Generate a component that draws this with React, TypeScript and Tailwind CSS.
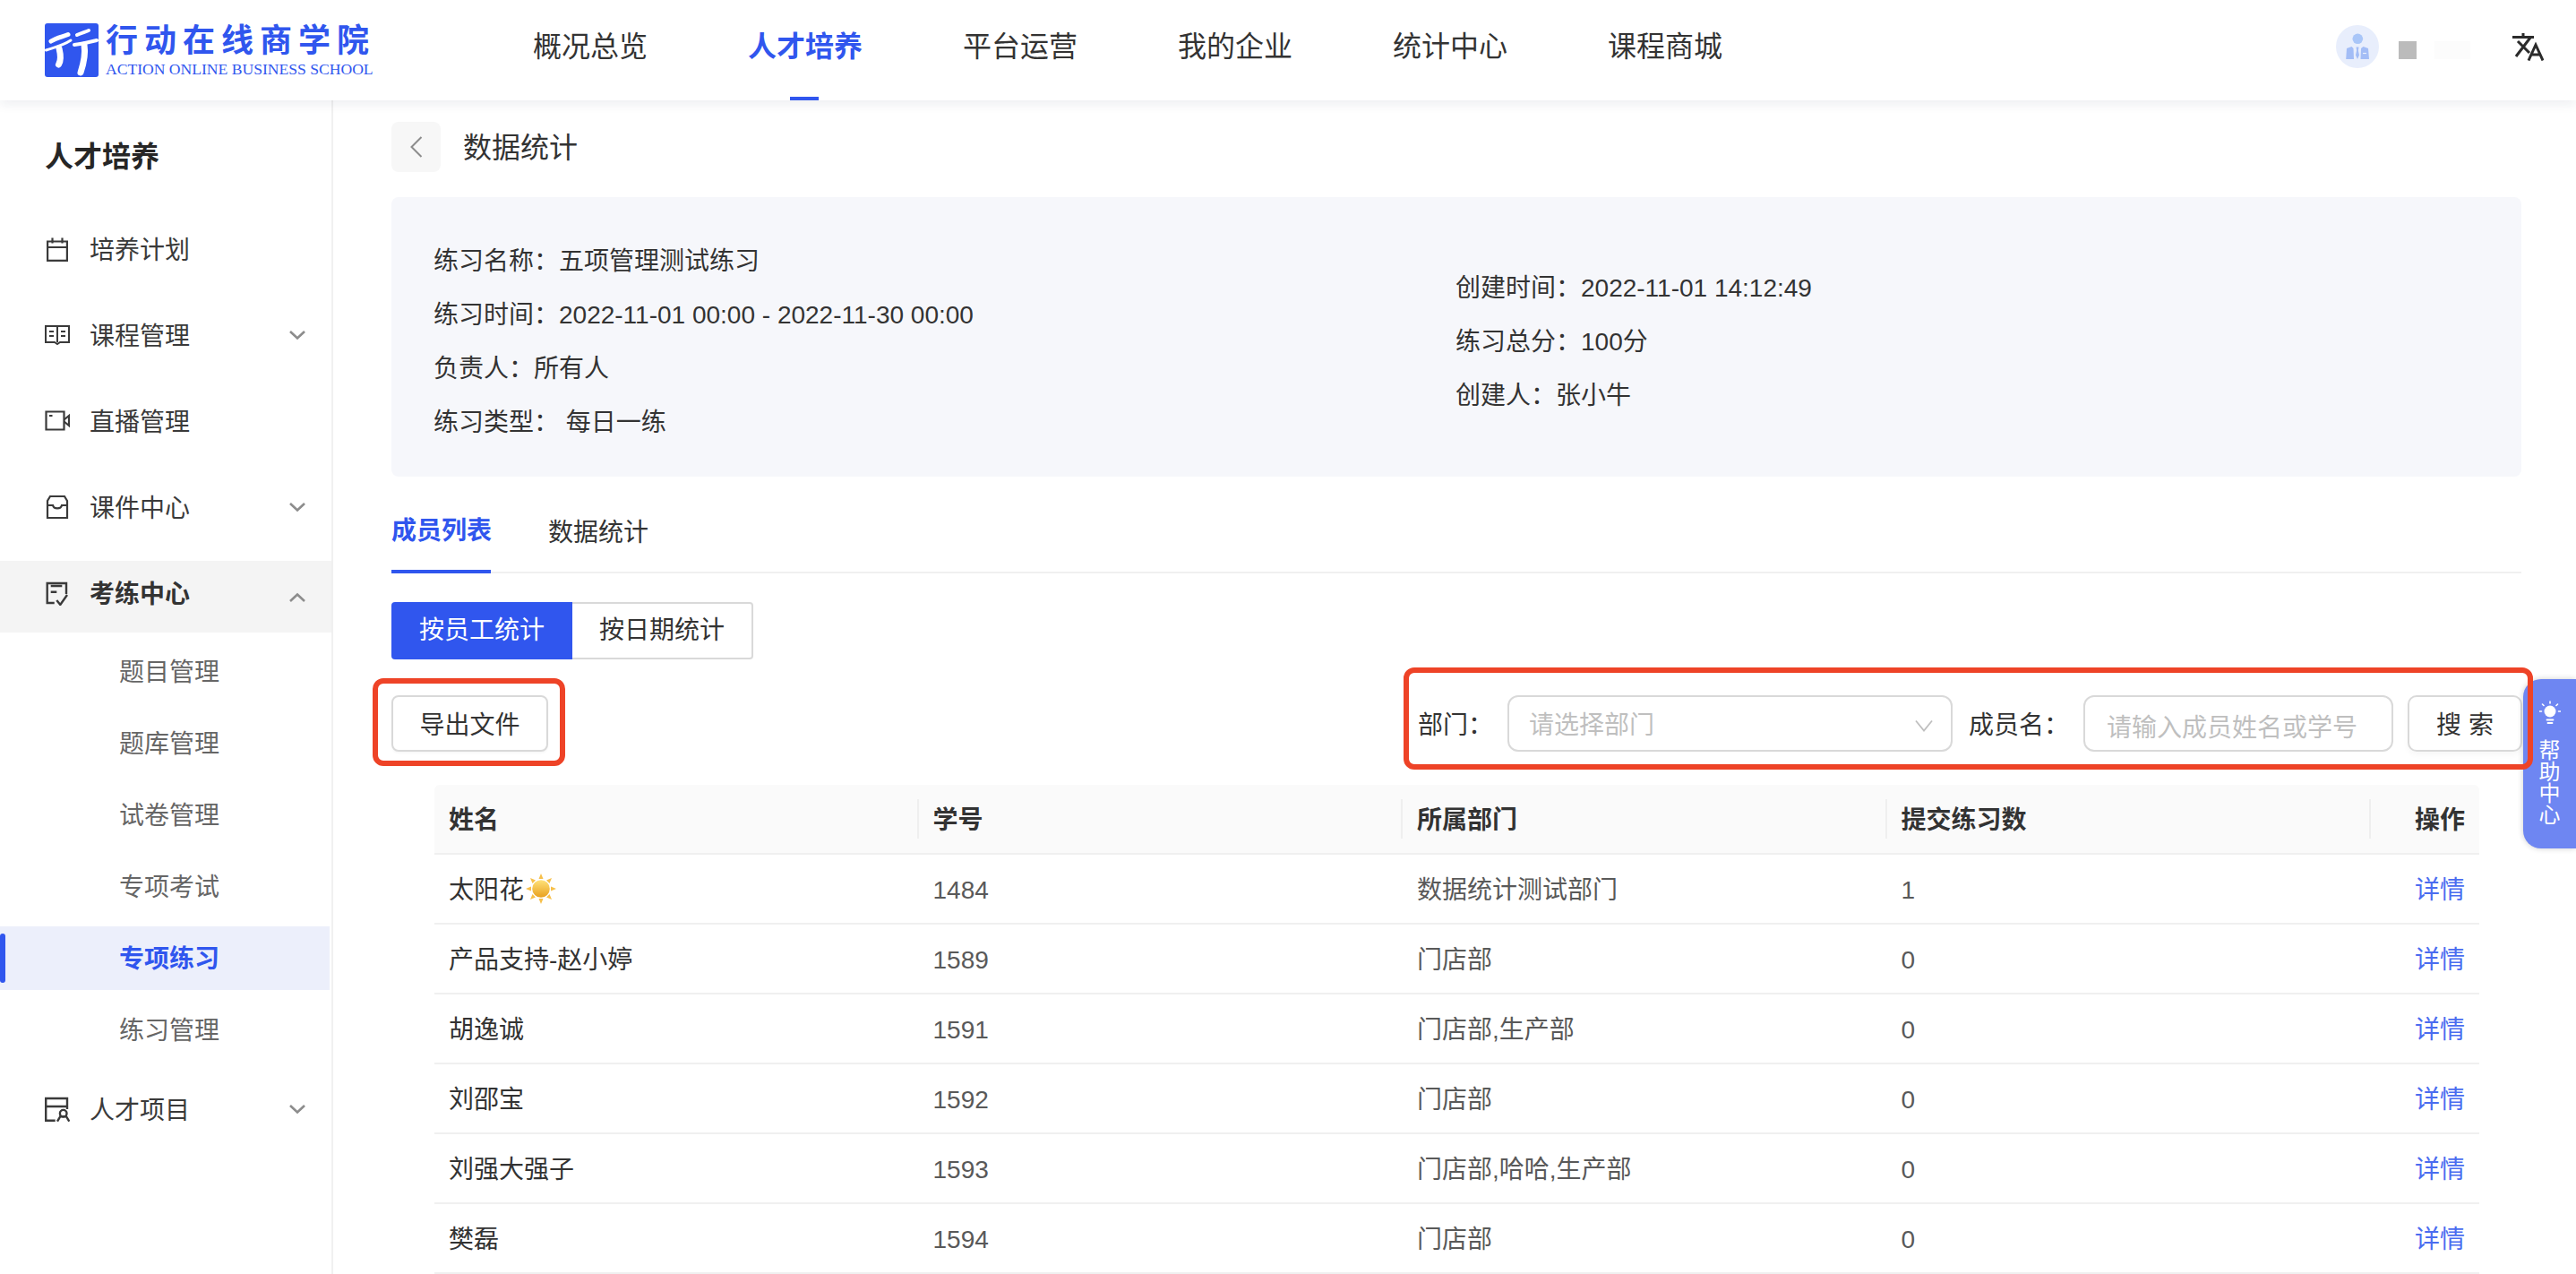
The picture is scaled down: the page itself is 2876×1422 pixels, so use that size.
import React from "react";

const COLON = "\uFF1A";

const Chevron = ({ up = false }: { up?: boolean }) => (
  <svg width="20" height="12" viewBox="0 0 20 12" fill="none" className="shrink-0">
    <path d={up ? "M2 10 10 2.5 18 10" : "M2 2 10 9.5 18 2"} stroke="#8c8c8c" strokeWidth="2.6" />
  </svg>
);

const iconProps = { fill: "none", stroke: "#3a3a3a", strokeWidth: 2.2 } as const;

const CalendarIcon = () => (
  <svg width="28" height="28" viewBox="0 0 28 28" {...iconProps}>
    <path d="M3.1 5.5h21.8v21.4H3.1z" />
    <path d="M3 12h22M8.5 1.5v6M19.5 1.5v6" />
  </svg>
);
const BookIcon = () => (
  <svg width="28" height="28" viewBox="0 0 28 28" {...iconProps} strokeWidth={2}>
    <path d="M1 4h26v18H17l-3 2-3-2H1z" />
    <path d="M14 4v18M5 10h5M5 15h5M18 10h5M18 15h5" />
  </svg>
);
const VideoIcon = () => (
  <svg width="28" height="28" viewBox="0 0 28 28" {...iconProps}>
    <path d="M1.5 3.5h20v20h-20z" />
    <path d="M21.5 12.5 27 8v11l-5.5-4.5M5 8h3.5" />
  </svg>
);
const InboxIcon = () => (
  <svg width="28" height="28" viewBox="0 0 28 28" {...iconProps}>
    <path d="M6 2h16l3 5v19H3V7z" />
    <path d="M3 12h6c1 4.5 9 4.5 10 0h6" />
  </svg>
);
const ExamIcon = () => (
  <svg width="28" height="28" viewBox="0 0 28 28" {...iconProps} strokeWidth={2.4}>
    <path d="M10.7 25H2.700V3H24v12" />
    <path d="M6.700 6h12.600M6.700 12.700h6.600M13.300 22l4 5 7.700-11" />
  </svg>
);
const ProjectIcon = () => (
  <svg width="28" height="28" viewBox="0 0 28 28" {...iconProps} strokeWidth={2.4}>
    <path d="M11.700 26.700H1.200V2H25v12M1.200 11H25" />
    <circle cx="20.700" cy="18.700" r="3.800" />
    <path d="M14 27.700l3.300-5.500h6.700l3.300 5.500" />
  </svg>
);

const Logo = () => (
  <svg width="60" height="60" viewBox="0 0 60 60" className="shrink-0">
    <rect width="60" height="60" rx="3" fill="#3056ee" />
    <g fill="none" stroke="#fff" strokeLinecap="round">
      <path d="M7 20C13 16 20 15 26 12.500" strokeWidth="5" />
      <path d="M1.500 30C10 27 20 25 29 19" strokeWidth="3" />
      <path d="M16 28C18 36 18 42 15.500 46" strokeWidth="7" />
      <path d="M36 13C40 11 44 10 49 8" strokeWidth="4" />
      <path d="M33 24C42 23 50 21 58 19" strokeWidth="4" />
      <path d="M44 24C46 36 43 46 40 55" strokeWidth="7" />
    </g>
  </svg>
);

const SunIcon = () => (
  <svg width="34" height="34" viewBox="0 0 34 34" className="shrink-0">
    <defs>
      <linearGradient id="sunFill" x1="0" y1="0" x2="0" y2="1">
        <stop offset="0" stopColor="#ffe27a" />
        <stop offset="1" stopColor="#e8a01e" />
      </linearGradient>
    </defs>
    <g fill="#f7c04a">
      <path d="M17 0l2.500 6h-5zM17 34l-2.500-6h5zM0 17l6-2.500v5zM34 17l-6 2.500v-5z" />
      <path d="M5 5l6 2.500-3.500 3.500zM29 5l-2.500 6-3.500-3.500zM5 29l2.500-6 3.500 3.500zM29 29l-6-2.500 3.500-3.500z" />
    </g>
    <circle cx="17" cy="17" r="9.800" fill="url(#sunFill)" />
  </svg>
);

const TopAvatar = () => (
  <svg width="48" height="48" viewBox="0 0 48 48" className="shrink-0">
    <circle cx="24" cy="24" r="24" fill="#e8eefc" />
    <circle cx="24.300" cy="15.300" r="5.800" fill="#a9c6f8" />
    <path d="M17.500 24 12 26l-.8 12H20l-.5-12zM30.500 24l5.500 2 1 12h-9.500l.5-12z" fill="#a3bdf6" />
    <path d="M22.500 24.500h3l-.6 4 1.100 5-2 4.500-2-4.500 1.100-5z" fill="#a3bdf6" />
    <path d="M30 31.500h4" stroke="#e8eefc" strokeWidth="1.200" />
  </svg>
);

const TranslateIcon = () => (
  <svg width="36" height="32" viewBox="0 0 36 32" fill="none" stroke="#2b2b2b" strokeWidth="3">
    <path d="M1 5.500h24M13 1v4.500M21 6 5 27M7 10l13 13" />
    <path d="M19 31.500 27 14l8 17.500M22 25h10" />
  </svg>
);

const BulbIcon = () => (
  <svg width="24" height="28" viewBox="0 0 24 28" fill="none" stroke="#fff" strokeLinecap="round">
    <circle cx="12" cy="12" r="6.500" fill="#fff" stroke="none" />
    <path d="M12 1v2M3.500 4l1.500 1.500M20.500 4 19 5.500M0.500 12h2M21.500 12h2" strokeWidth="1.600" />
    <path d="M8.500 21.500h7M9.500 25h5" strokeWidth="1.800" />
  </svg>
);

const menu = [
  { label: "培养计划", icon: <CalendarIcon /> },
  { label: "课程管理", icon: <BookIcon />, chevron: true },
  { label: "直播管理", icon: <VideoIcon /> },
  { label: "课件中心", icon: <InboxIcon />, chevron: true },
];

const subMenu = ["题目管理", "题库管理", "试卷管理", "专项考试", "专项练习", "练习管理"];
const nav = ["概况总览", "人才培养", "平台运营", "我的企业", "统计中心", "课程商城"];

const rows: [string, string, string, string][] = [
  ["太阳花", "1484", "数据统计测试部门", "1"],
  ["产品支持-赵小婷", "1589", "门店部", "0"],
  ["胡逸诚", "1591", "门店部,生产部", "0"],
  ["刘邵宝", "1592", "门店部", "0"],
  ["刘强大强子", "1593", "门店部,哈哈,生产部", "0"],
  ["樊磊", "1594", "门店部", "0"],
];

const Sidebar = () => (
  <aside className="w-[372px] h-[1310px] shrink-0 border-r-2 border-[#f0f0f0] bg-white">
    <div className="h-[126px] pl-[50px] pt-[42px] text-[32px] leading-[42px] font-semibold text-[#262626]">人才培养</div>
    {menu.map((m, i) => (
      <div key={m.label} className={`h-[80px] flex items-center pl-[50px] pr-[28px] text-[#3a3a3a] ${i === 0 ? "" : "mt-[16px]"}`}>
        <span className="w-[50px] flex items-center">{m.icon}</span>
        <span className="flex-1 pt-[4px] text-[28px] leading-[40px]">{m.label}</span>
        {m.chevron && <Chevron />}
      </div>
    ))}
    <div className="h-[80px] mt-[20px] pb-[8px] flex items-center pl-[50px] pr-[28px] bg-[#f4f4f4] text-[#333]">
      <span className="w-[50px] flex items-center"><ExamIcon /></span>
      <span className="flex-1 pt-[4px] text-[28px] leading-[40px] font-semibold">考练中心</span>
      <span className="mt-[10px] flex"><Chevron up /></span>
    </div>
    <div className="pt-[8px]">
      {subMenu.map((s) => {
        const active = s === "专项练习";
        return (
          <div
            key={s}
            className={`relative h-[71px] mb-[9px] pt-[2px] w-[368px] flex items-center pl-[133px] text-[28px] leading-[40px] ${active ? "bg-[#eceffb] text-[#3056ee] font-semibold" : "text-[#666]"}`}
          >
            {active && <span className="absolute left-0 top-[8px] h-[55px] w-[6px] rounded-[3px] bg-[#3056ee]" />}
            {s}
          </div>
        );
      })}
    </div>
    <div className="h-[80px] mt-[13px] flex items-center pl-[50px] pr-[28px] text-[#3a3a3a]">
      <span className="w-[50px] flex items-center"><ProjectIcon /></span>
      <span className="flex-1 pt-[4px] text-[28px] leading-[40px]">人才项目</span>
      <Chevron />
    </div>
  </aside>
);

const Info = ({ label, value }: { label: string; value: string }) => (
  <div className="h-[60px] pt-[4px] flex items-center text-[28px] leading-[40px] text-[#333] whitespace-pre">
    {label + COLON + value}
  </div>
);

const th = "h-full flex items-center pl-[16px] pt-[4px] text-[28px] font-semibold text-[#333]";

const Main = () => (
  <main className="flex-1 min-w-0 pl-[65px] pr-[61px] pt-[24px]">
    <div className="flex items-center h-[56px]">
      <div className="w-[55px] h-[56px] rounded-[8px] bg-[#f7f7f7] flex items-center justify-center">
        <svg width="18" height="26" viewBox="0 0 18 26" fill="none">
          <path d="M14.500 2 3.500 13l11 11" stroke="#8c8c8c" strokeWidth="2" />
        </svg>
      </div>
      <span className="ml-[25px] pt-[2px] text-[32px] leading-[44px] text-[#333]">数据统计</span>
    </div>

    <div className="mt-[28px] h-[312px] rounded-[8px] bg-[#f6f7fb] flex pt-[40px]">
      <div className="w-[1139px] pl-[47px] shrink-0">
        <Info label="练习名称" value="五项管理测试练习" />
        <Info label="练习时间" value="2022-11-01 00:00 - 2022-11-30 00:00" />
        <Info label="负责人" value="所有人" />
        <Info label="练习类型" value=" 每日一练" />
      </div>
      <div className="pl-[49px] pt-[30px]">
        <Info label="创建时间" value="2022-11-01 14:12:49" />
        <Info label="练习总分" value="100分" />
        <Info label="创建人" value="张小牛" />
      </div>
    </div>

    <div className="mt-[18px] h-[90px] border-b-2 border-[#f0f0f0] flex gap-[64px] text-[28px] leading-[40px]">
      <div className="h-[90px] w-[111px] border-b-4 border-[#3056ee] flex items-center font-semibold text-[#3056ee] whitespace-nowrap">成员列表</div>
      <div className="h-[90px] flex items-center text-[#333]">数据统计</div>
    </div>

    <div className="mt-[32px] flex h-[64px] text-[28px] leading-[40px]">
      <div className="w-[202px] rounded-l-[4px] bg-[#3056ee] text-white flex items-center justify-center">按员工统计</div>
      <div className="w-[202px] rounded-r-[4px] border-2 border-l-0 border-[#d9d9d9] text-[#333] flex items-center justify-center">按日期统计</div>
    </div>

    <div className="mt-[40px] h-[63px] flex items-stretch justify-between text-[28px] leading-[40px]">
      <div className="relative w-[175px]">
        <button className="w-full h-full pt-[4px] rounded-[8px] border-2 border-[#d9d9d9] bg-white text-[#333] shadow-[0_2px_2px_rgba(0,0,0,0.03)]">导出文件</button>
        <div className="absolute -left-[21px] -right-[19px] -top-[19px] -bottom-[16px] rounded-[12px] border-[6px] border-[#ee4327] pointer-events-none" />
      </div>
      <div className="relative flex items-stretch -mr-px">
        <span className="w-[100px] pt-[4px] flex items-center text-[#333]">{"部门" + COLON}</span>
        <div className="w-[497px] pt-[4px] rounded-[12px] border-2 border-[#d9d9d9] bg-white flex items-center justify-between pl-[22px] pr-[20px]">
          <span className="text-[#bfbfbf]">请选择部门</span>
          <svg width="20" height="14" viewBox="0 0 20 14" fill="none">
            <path d="M1 1.500 10 12.500 19 1.500" stroke="#bfbfbf" strokeWidth="1.800" />
          </svg>
        </div>
        <span className="ml-[18px] w-[128px] pt-[4px] flex items-center text-[#333]">{"成员名" + COLON}</span>
        <input
          className="w-[346px] rounded-[12px] border-2 border-[#d9d9d9] bg-white pl-[24px] pt-[10px] outline-none placeholder:text-[#bfbfbf]"
          placeholder="请输入成员姓名或学号"
        />
        <button className="ml-[16px] w-[128px] pt-[4px] rounded-[10px] border-2 border-[#d9d9d9] bg-white text-[#333] shadow-[0_4px_6px_rgba(0,0,0,0.03)] whitespace-pre">搜 索</button>
        <div className="absolute -left-[16px] -right-[12px] -top-[31px] -bottom-[20px] z-20 rounded-[12px] border-[6px] border-[#ee4327] pointer-events-none" />
      </div>
    </div>

    <div className="mt-[37px] ml-[48px] mr-[47px]">
      <div className="h-[78px] flex bg-[#fafafa] rounded-t-[6px] border-b-2 border-[#f0f0f0]">
        {["姓名", "学号", "所属部门", "提交练习数"].map((h) => (
          <div key={h} className="flex-1 relative">
            <div className={th}>{h}</div>
            <span className="absolute right-0 top-[16px] h-[44px] w-[2px] bg-[#efefef]" />
          </div>
        ))}
        <div className="w-[121px] h-full flex items-center justify-end pr-[16px] pt-[4px] text-[28px] font-semibold text-[#333]">操作</div>
      </div>
      {rows.map((r) => (
        <div key={r[1]} className="h-[78px] flex items-center border-b-2 border-[#f0f0f0] text-[28px] leading-[40px]">
          <div className="flex-1 pl-[16px] flex items-center text-[#333]">
            <span className="pt-[4px]">{r[0]}</span>
            {r[0] === "太阳花" && <span className="ml-[2px]"><SunIcon /></span>}
          </div>
          <div className="flex-1 pl-[16px] pt-[4px] text-[#595959]">{r[1]}</div>
          <div className="flex-1 pl-[16px] pt-[4px] text-[#595959]">{r[2]}</div>
          <div className="flex-1 pl-[16px] pt-[4px] text-[#595959]">{r[3]}</div>
          <div className="w-[121px] text-right pr-[16px] pt-[4px] text-[#4a6cf0]">详情</div>
        </div>
      ))}
    </div>
  </main>
);

export default function App() {
  return (
    <div
      className="relative w-[2876px] h-[1422px] overflow-hidden bg-white"
      style={{ fontFamily: '"Liberation Sans", "Noto Sans CJK SC", sans-serif' }}
    >
      <header className="relative z-10 h-[112px] bg-white flex items-center shadow-[0_4px_12px_rgba(30,40,80,0.08)]">
        <div className="ml-[50px] flex items-center w-[545px] shrink-0">
          <Logo />
          <div className="ml-[8px]">
            <div className="text-[36px] leading-[40px] font-bold tracking-[7px] text-[#3056ee] whitespace-nowrap">行动在线商学院</div>
            <div className="mt-[2px] text-[17.6px] leading-[18px] text-[#3056ee] whitespace-nowrap" style={{ fontFamily: '"Liberation Serif", serif' }}>
              ACTION ONLINE BUSINESS SCHOOL
            </div>
          </div>
        </div>
        <nav className="flex gap-[112px] h-full">
          {nav.map((n) => {
            const active = n === "人才培养";
            return (
              <div key={n} className={`relative h-full flex items-center pb-[8px] text-[32px] leading-[44px] ${active ? "text-[#3056ee] font-semibold" : "text-[#333]"}`}>
                {n}
                {active && <span className="absolute left-[47px] bottom-0 h-[4px] w-[32px] bg-[#3056ee]" />}
              </div>
            );
          })}
        </nav>
        <div className="ml-auto flex items-center pr-[36px]">
          <span className="mb-[8px] flex"><TopAvatar /></span>
          <span className="ml-[22px] w-[20px] h-[20px] bg-[#bbb]" />
          <span className="ml-[20px] w-[40px] h-[20px] bg-[#fcfcfc]" />
          <span className="ml-[46px] mb-[8px] flex"><TranslateIcon /></span>
        </div>
      </header>
      <div className="flex">
        <Sidebar />
        <Main />
      </div>
      <div className="absolute right-0 top-[758px] z-10 w-[59px] h-[189px] rounded-l-[20px] bg-[#6e86f2] shadow-[0_0_6px_rgba(0,0,0,0.2)] flex flex-col items-center pt-[24px]">
        <BulbIcon />
        <div className="mt-[16px] w-[24px] text-[24px] leading-[24px] text-white text-center">帮助中心</div>
      </div>
    </div>
  );
}
